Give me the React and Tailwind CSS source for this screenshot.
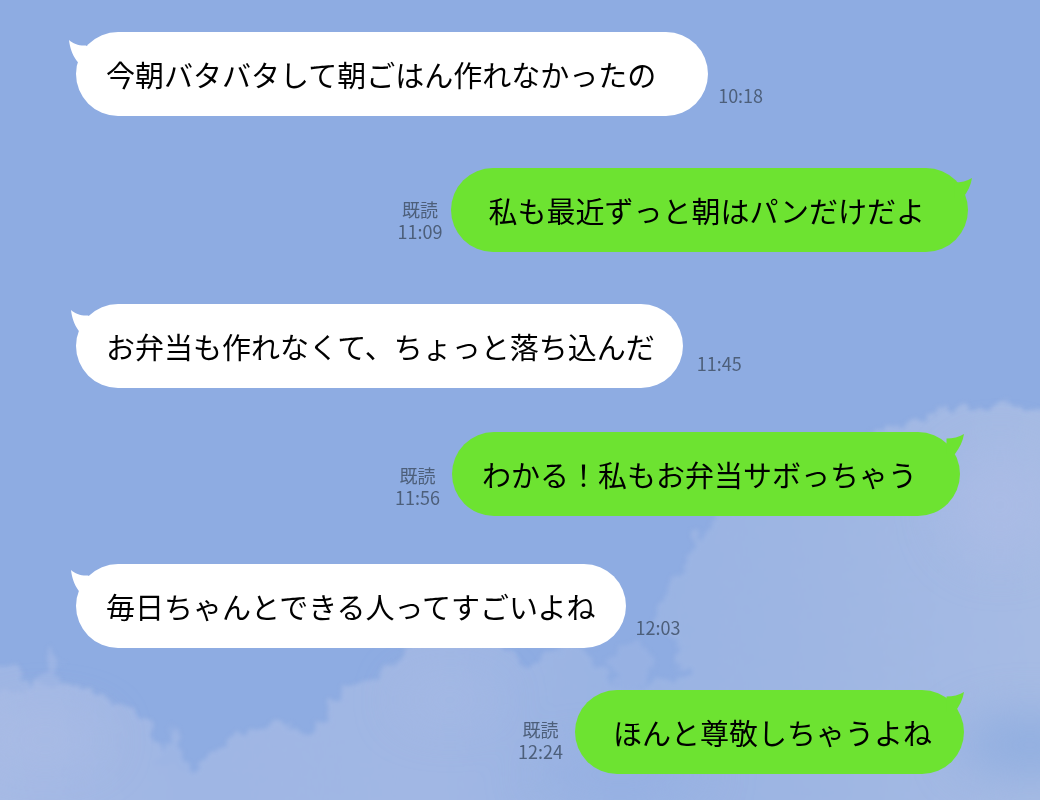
import clsx from 'clsx';

const messages = [
  {
    text: '今朝バタバタして朝ごはん作れなかったの',
    time: '10:18',
    row: 'gap-[10px]',
    bubble: 'pl-[30px] pr-[52px]',
    tail: '-left-[7px] top-2',
    meta: 'pb-[10px]',
  },
  {
    mine: true,
    text: '私も最近ずっと朝はパンだけだよ',
    time: '11:09',
    row: 'mt-[52px] gap-2 pr-[72px]',
    bubble: 'pl-[38px] pr-[43px]',
    tail: '-right-1 top-[10px]',
    meta: 'pb-[10px]',
  },
  {
    text: 'お弁当も作れなくて、ちょっと落ち込んだ',
    time: '11:45',
    row: 'mt-[52px] gap-[14px]',
    bubble: 'pl-[30px] pr-[28px]',
    tail: '-left-[5px] top-[6px]',
    meta: 'pb-[14px]',
  },
  {
    mine: true,
    text: 'わかる！私もお弁当サボっちゃう',
    time: '11:56',
    row: 'mt-[44px] gap-3 pr-[80px]',
    bubble: 'pl-[30px] pr-[43px]',
    tail: '-right-1 top-[2px]',
    meta: 'pb-2',
  },
  {
    text: '毎日ちゃんとできる人ってすごいよね',
    time: '12:03',
    row: 'mt-[48px] gap-[10px]',
    bubble: 'pl-[30px] pr-[30px]',
    tail: '-left-[5px] top-[6px]',
    meta: 'pb-[10px]',
  },
  {
    mine: true,
    text: 'ほんと尊敬しちゃうよね',
    time: '12:24',
    row: 'mt-[42px] gap-3 pr-[76px]',
    bubble: 'pl-[38px] pr-[32px]',
    tail: 'right-0 top-[2px]',
    meta: 'pb-3',
  },
];

function Tail({ mine, className }) {
  if (mine) {
    return (
      <svg className={clsx('absolute', className)} width="26" height="24" viewBox="0 0 26 24" aria-hidden="true">
        <path d="M26 0C21 3 15 4.500 8.500 4.500V20H17C21.500 14 25 7 26 0Z" fill="#6de331" />
      </svg>
    );
  }
  return (
    <svg className={clsx('absolute', className)} width="26" height="26" viewBox="0 0 26 26" aria-hidden="true">
      <path d="M0 0C4 3.500 10 6 17 5.500L26 12V26H12L7.500 20.500C3 14 1 8 0 0Z" fill="#ffffff" />
    </svg>
  );
}

function Message({ message }) {
  const { mine, text, time, row, bubble, tail, meta } = message;

  return (
    <li className={clsx('flex items-end', mine ? 'flex-row-reverse' : 'pl-[76px]', row)}>
      <div
        className={clsx(
          'relative rounded-[42px] py-[22px] text-[29px] leading-[40px] text-black',
          mine ? 'bg-[#6de331]' : 'bg-white',
          bubble
        )}
      >
        <Tail mine={mine} className={tail} />
        <p className="relative">{text}</p>
      </div>
      <div className={clsx('shrink-0 text-center text-[18px] leading-[22px] text-[#4d5f7a]', meta)}>
        {mine && <p>既読</p>}
        <time className="block">{time}</time>
      </div>
    </li>
  );
}

function Clouds() {
  return (
    <svg
      className="absolute inset-0 h-full w-full"
      viewBox="0 0 1040 800"
      preserveAspectRatio="xMidYMax slice"
      aria-hidden="true"
    >
      <defs>
        <filter id="ragged" x="-5%" y="-5%" width="110%" height="110%" colorInterpolationFilters="sRGB">
          <feTurbulence type="fractalNoise" baseFrequency="0.06" numOctaves="4" seed="8" />
          <feDisplacementMap in="SourceGraphic" scale="26" xChannelSelector="R" yChannelSelector="G" />
          <feGaussianBlur stdDeviation="2" />
        </filter>
        <filter id="soft" x="-50%" y="-50%" width="200%" height="200%" colorInterpolationFilters="sRGB">
          <feGaussianBlur stdDeviation="24" />
        </filter>
        <linearGradient id="haze" gradientUnits="userSpaceOnUse" x1="0" y1="0" x2="1040" y2="0">
          <stop offset="0" stopColor="#a6bae5" />
          <stop offset="0.18" stopColor="#9fb6e4" />
          <stop offset="0.42" stopColor="#a1b7e4" />
          <stop offset="0.6" stopColor="#99b3e3" />
          <stop offset="0.75" stopColor="#9db5e3" />
          <stop offset="1" stopColor="#a6bbe4" />
        </linearGradient>
      </defs>

      <g filter="url(#ragged)">
        <path
          d="M-30 690L0 692L22 684L50 680L80 688L112 700L132 710L150 728L156 748L170 764L192 772L215 752L235 735L252 728L280 724L295 733L315 728L332 702L350 686L375 675L392 660L408 648L420 636L490 640L512 650L522 662L535 662L555 648L575 645L590 652L605 680L640 690L668 678L692 672L675 664L682 645L660 628L655 612L668 590L688 564L696 540L708 518L760 500L800 450L900 428L918 420L935 413L975 407L1000 404L1030 408L1070 400V830H-30Z"
          fill="url(#haze)"
        />
        <path d="M-10 668L14 662L30 676L22 692H-10Z" fill="#9fb6e4" />
        <path d="M40 688L48 666L46 650L54 644L64 664L58 690Z" fill="#9cb4e4" />
        <path d="M158 764L160 738L176 734L184 758L188 774Z" fill="#9db5e4" />
        <path d="M606 668L622 645L640 640L652 665L645 684L622 690Z" fill="#97b1e3" />
      </g>

      <g filter="url(#soft)">
        <ellipse cx="1000" cy="505" rx="55" ry="55" fill="#afbde7" opacity="0.5" />
        <ellipse cx="1030" cy="745" rx="70" ry="28" fill="#8aaadf" opacity="0.8" />
        <ellipse cx="620" cy="775" rx="90" ry="20" fill="#93aee2" opacity="0.6" />
        <ellipse cx="45" cy="740" rx="60" ry="25" fill="#adbde6" opacity="0.5" />
        <ellipse cx="450" cy="700" rx="50" ry="20" fill="#a8bce5" opacity="0.5" />
      </g>
    </svg>
  );
}

export default function App() {
  return (
    <main
      lang="ja"
      className="relative isolate min-h-screen overflow-hidden bg-[#8eace2] font-['Noto_Sans_CJK_JP',sans-serif]"
    >
      <Clouds />
      <ol className="relative pt-8 pb-6">
        {messages.map((message) => (
          <Message key={message.time} message={message} />
        ))}
      </ol>
    </main>
  );
}
